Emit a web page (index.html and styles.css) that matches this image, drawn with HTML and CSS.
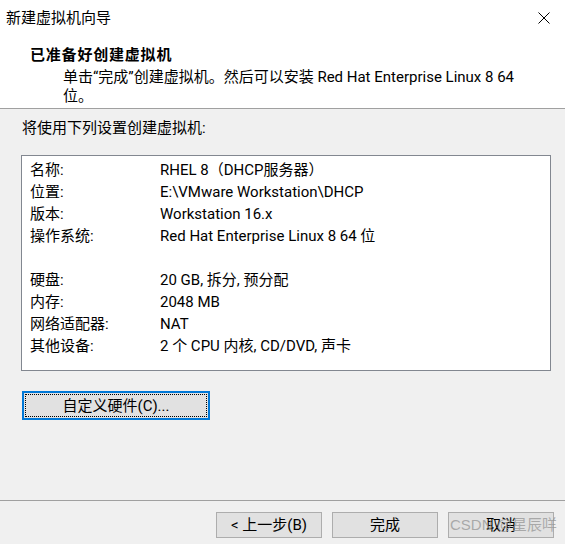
FILE: index.html
```html
<!DOCTYPE html>
<html lang="zh-CN">
<head>
<meta charset="utf-8">
<title>新建虚拟机向导</title>
<link rel="stylesheet" href="styles.css">
</head>
<body>
<div class="window">
  <header class="header">
    <div class="titlebar">
      <span class="title">新建虚拟机向导</span>
      <svg class="close" width="12" height="12" viewBox="0 0 12 12"><path d="M0.5 0.5 L11.5 11.5 M11.5 0.5 L0.5 11.5" stroke="#000" stroke-width="1" fill="none"/></svg>
    </div>
    <div class="heading">已准备好创建虚拟机</div>
    <div class="subtitle">单击“完成”创建虚拟机。然后可以安装 Red Hat Enterprise Linux 8 64<br>位。</div>
  </header>
  <main class="main">
    <div class="intro">将使用下列设置创建虚拟机:</div>
    <div class="summary">
      <div class="row"><span>名称:</span><span>RHEL 8（DHCP服务器）</span></div>
      <div class="row"><span>位置:</span><span>E:\VMware Workstation\DHCP</span></div>
      <div class="row"><span>版本:</span><span>Workstation 16.x</span></div>
      <div class="row"><span>操作系统:</span><span>Red Hat Enterprise Linux 8 64 位</span></div>
      <div class="row"><span></span><span></span></div>
      <div class="row"><span>硬盘:</span><span>20 GB, 拆分, 预分配</span></div>
      <div class="row"><span>内存:</span><span>2048 MB</span></div>
      <div class="row"><span>网络适配器:</span><span>NAT</span></div>
      <div class="row"><span>其他设备:</span><span>2 个 CPU 内核, CD/DVD, 声卡</span></div>
    </div>
    <button class="btn btn-focus">自定义硬件(C)...</button>
  </main>
  <footer class="footer">
    <button class="btn">&lt; 上一步(B)</button>
    <button class="btn">完成</button>
    <button class="btn btn-cancel">取消<span class="watermark">CSDN @星辰咩</span></button>
  </footer>
</div>
</body>
</html>
```

FILE: styles.css
```css
* { box-sizing: border-box; }
html, body { margin: 0; padding: 0; }
body {
  width: 565px;
  height: 544px;
  overflow: hidden;
  background: #f0f0f0;
  font-family: Roboto, "Noto Sans CJK SC", sans-serif;
  font-size: 15px;
  color: #000;
}
.window {
  width: 565px;
  height: 544px;
  display: flex;
  flex-direction: column;
}
.header {
  height: 109px;
  background: #fff;
  border-bottom: 1px solid #a0a0a0;
  flex: none;
}
.titlebar {
  height: 36px;
  display: flex;
  align-items: center;
  justify-content: space-between;
  padding: 0 15px 0 6px;
}
.title { line-height: 20px; }
.close { display: block; }
.heading {
  margin: 9px 0 0 30px;
  font-weight: bold;
  line-height: 20px;
  letter-spacing: 0.8px;
}
.subtitle {
  margin: 3px 0 0 63px;
  line-height: 19px;
}
.main {
  flex: 1;
  padding: 8px 0 0 22px;
}
.intro { line-height: 22px; }
.summary {
  margin: 16px 0 0 -1px;
  width: 530px;
  height: 216px;
  background: #fff;
  border: 1px solid #828790;
  padding: 3px 8px;
}
.row {
  display: grid;
  grid-template-columns: 130px 1fr;
  line-height: 22px;
  height: 22px;
}
.btn {
  font: inherit;
  color: #000;
  background: #e1e1e1;
  border: 1px solid #adadad;
  height: 26px;
  width: 106px;
  padding: 0;
  line-height: 22px;
  position: relative;
}
.btn-focus {
  margin-top: 20px;
  width: 188px;
  height: 29px;
  border: 2px solid #0078d7;
}
.btn-focus::after {
  content: "";
  position: absolute;
  inset: 1px;
  border: 1px dotted #000;
}
.footer {
  flex: none;
  height: 44px;
  border-top: 1px solid #a0a0a0;
  display: flex;
  justify-content: flex-end;
  align-items: flex-start;
  gap: 10px;
  padding: 11px 11px 0 0;
}
.watermark {
  position: absolute;
  left: 1px;
  top: 0;
  line-height: 24px;
  font-family: "Liberation Sans", "Noto Sans CJK SC", sans-serif;
  font-size: 15px;
  color: rgba(150, 150, 150, 0.75);
  white-space: nowrap;
}
```
